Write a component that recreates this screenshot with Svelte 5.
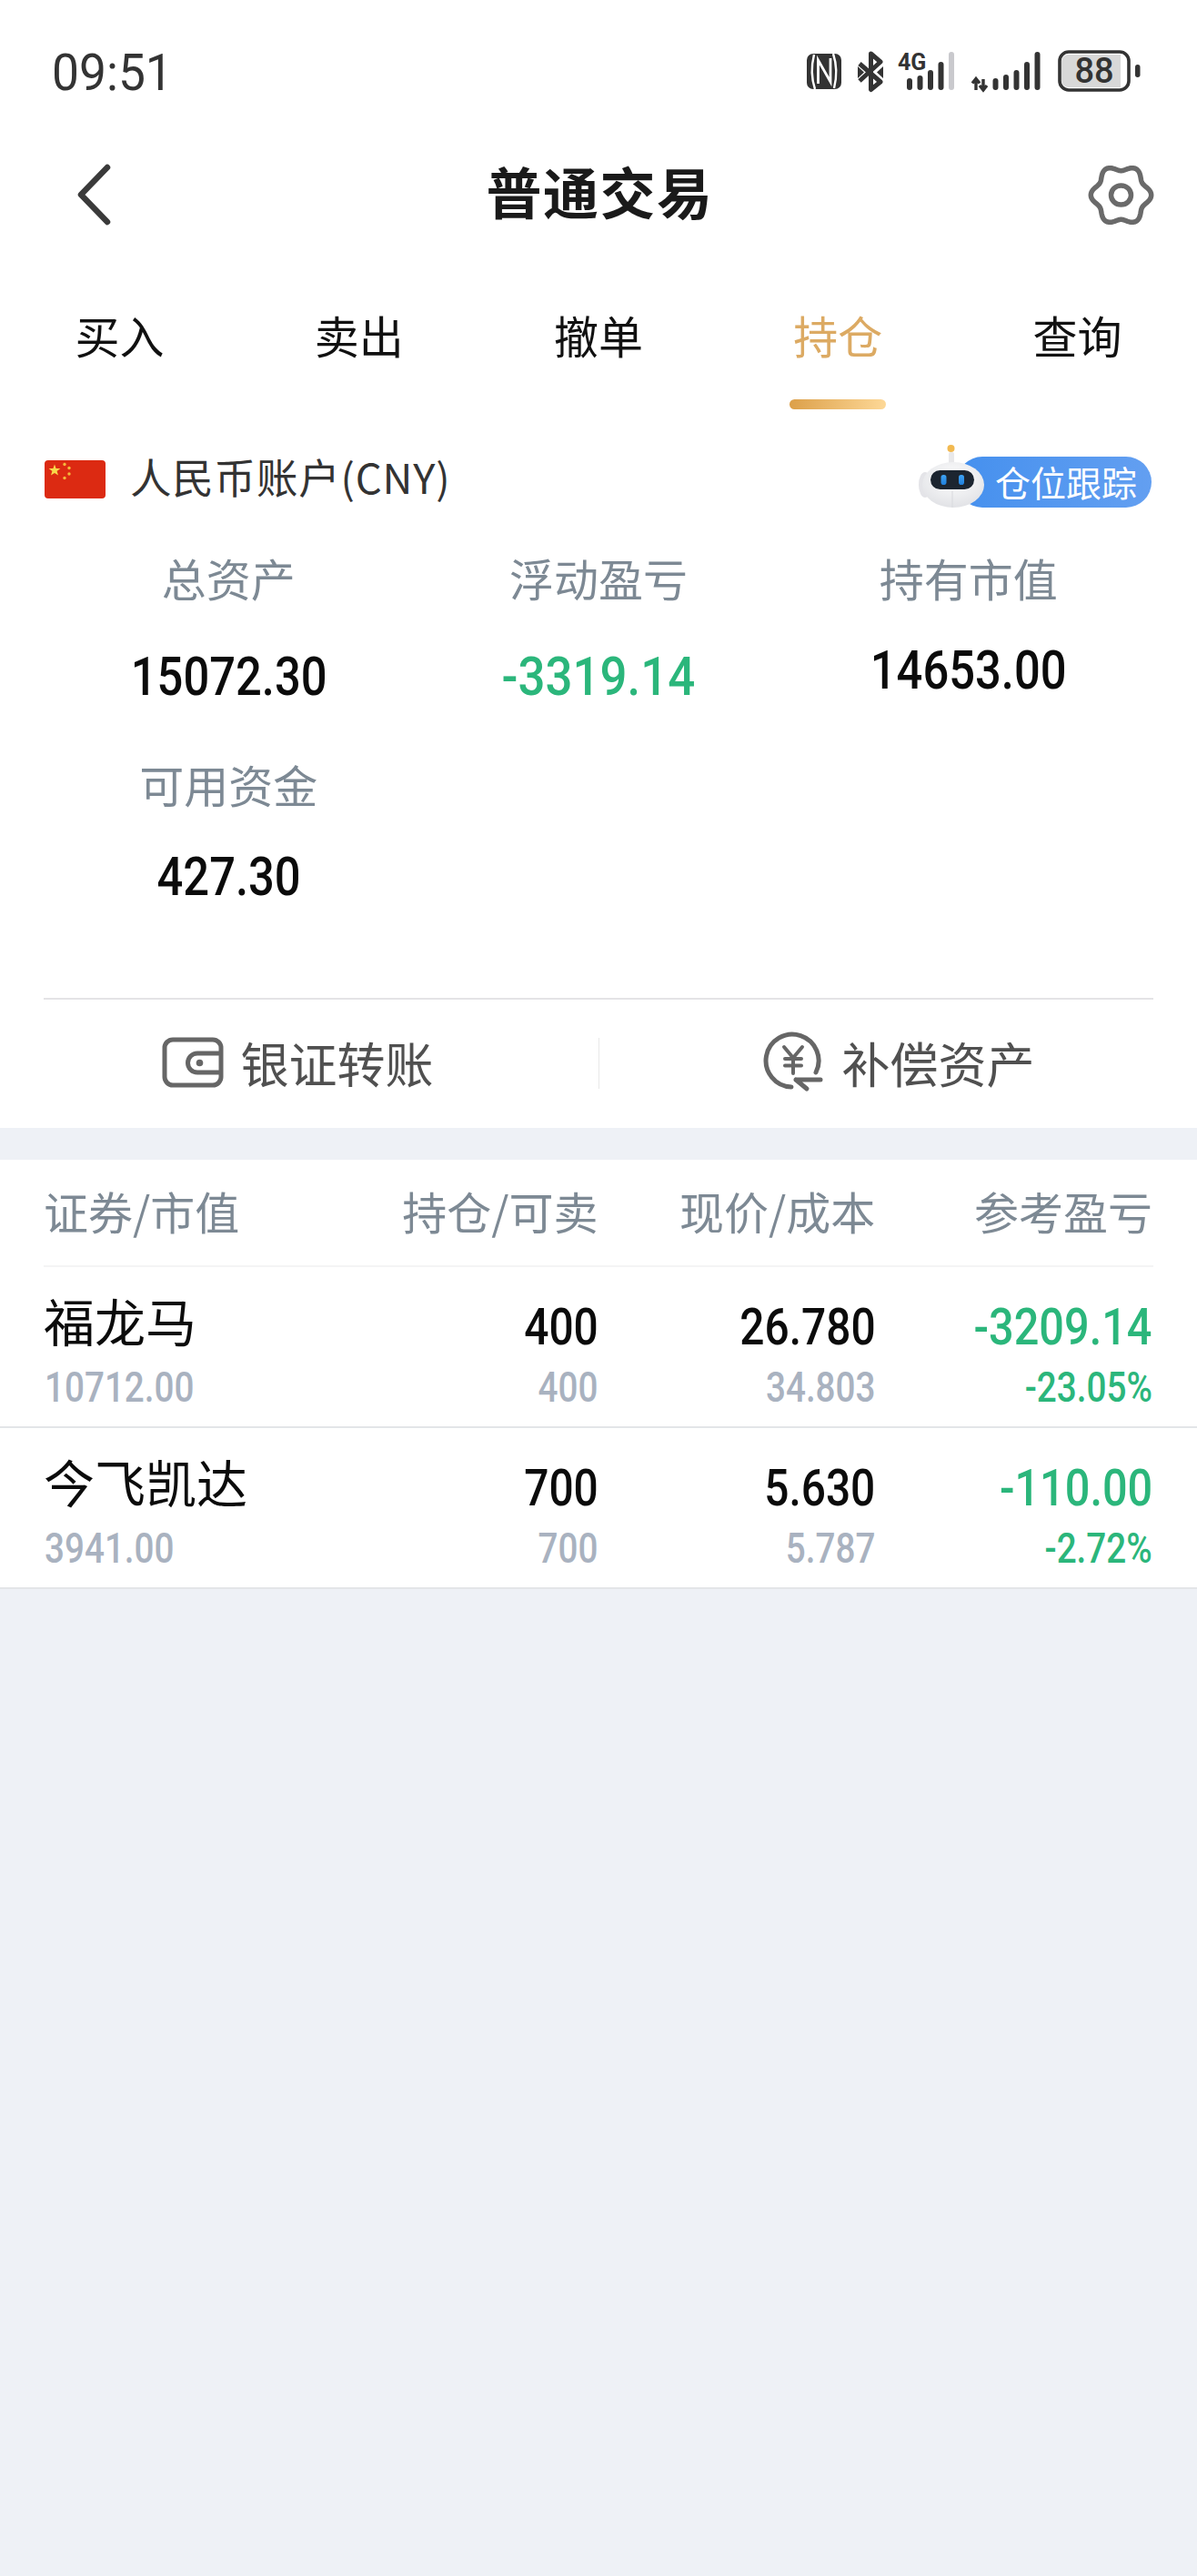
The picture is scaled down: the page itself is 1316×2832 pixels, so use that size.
<script>
  const gear = (() => {
    const cx = 1232.5, cy = 214.5, pts = [];
    for (let i = 0; i < 180; i++) {
      const t = (i / 180) * Math.PI * 2;
      const r = 30 + 3.2 * Math.cos(6 * t);
      pts.push(`${(cx + r * Math.cos(t)).toFixed(2)} ${(cy + r * Math.sin(t)).toFixed(2)}`);
    }
    return 'M' + pts.join('L') + 'Z';
  })();

  const tabs = ['买入', '卖出', '撤单', '持仓', '查询'];
  const active = '持仓';
  const headers = ['证券/市值', '持仓/可卖', '现价/成本', '参考盈亏'];
  const rows = [
    { name: '福龙马', value: '10712.00', qty: '400', avail: '400', price: '26.780', cost: '34.803', pnl: '-3209.14', pct: '-23.05%' },
    { name: '今飞凯达', value: '3941.00', qty: '700', avail: '700', price: '5.630', cost: '5.787', pnl: '-110.00', pct: '-2.72%' }
  ];
</script>

<div class="page">
  <section class="top">
    <div class="status">
      <span class="time">09:51</span>
      <svg class="sicons" viewBox="884 46 372 56" width="372" height="56" aria-hidden="true">
        <rect x="887" y="59" width="38" height="39" rx="7" fill="#333"/>
        <path d="M896 98C892 86 892 72 895 60" fill="none" stroke="#fff" stroke-width="2.4"/>
        <path d="M916 59C920 71 920 85 917 97" fill="none" stroke="#fff" stroke-width="2.4"/>
        <path d="M899.5 92V66L913 90V64" fill="none" stroke="#fff" stroke-width="2.8"/>
        <path d="M945 70L968 90L957.500 98.500V59L968 68L945 89" fill="none" stroke="#333" stroke-width="5" stroke-linejoin="round"/>
        <path d="M943 73L950 79.500L943 86ZM971 73L964 79.500L971 86Z" fill="#333"/>
        <text x="987" y="77" class="fourg">4G</text>
        <rect x="997" y="86" width="6" height="13" rx="3" fill="#333"/>
        <rect x="1008.500" y="83" width="6" height="16" rx="3" fill="#333"/>
        <rect x="1020" y="77" width="6" height="22" rx="3" fill="#333"/>
        <rect x="1031.500" y="68" width="6" height="31" rx="3" fill="#333"/>
        <rect x="1043" y="57" width="6" height="42" rx="3" fill="#c9c9cd"/>
        <path d="M1073 99V87M1069 91.500L1073 86.500L1077 91.500M1081 87V99M1077 94L1081 99L1085 94" fill="none" stroke="#333" stroke-width="3.400"/>
        <rect x="1091.500" y="86" width="6" height="13" rx="3" fill="#333"/>
        <rect x="1103" y="82" width="6" height="17" rx="3" fill="#333"/>
        <rect x="1114.500" y="77" width="6" height="22" rx="3" fill="#333"/>
        <rect x="1126" y="68" width="6" height="31" rx="3" fill="#333"/>
        <rect x="1137.500" y="57" width="6" height="42" rx="3" fill="#333"/>
        <rect x="1165" y="57" width="76" height="42" rx="10" fill="#fff" stroke="#333" stroke-width="3.600"/>
        <path d="M1175 60H1232V96H1175A8 8 0 0 1 1167 88V68A8 8 0 0 1 1175 60Z" fill="#d8d8d8"/>
        <text x="1203" y="91" class="batt" text-anchor="middle">88</text>
        <rect x="1248" y="71" width="5.500" height="14" rx="2.700" fill="#333"/>
      </svg>
    </div>

    <header class="nav">
      <svg class="back" viewBox="0 0 42 70" width="42" height="70" aria-hidden="true">
        <path d="M35 5L6 35L35 65" fill="none" stroke="#3a3a3a" stroke-width="6.500" stroke-linecap="round" stroke-linejoin="round"/>
      </svg>
      <h1>普通交易</h1>
      <svg class="gear" viewBox="1194 176 77 77" width="77" height="77" aria-hidden="true">
        <path d={gear} fill="none" stroke="#6a6a6a" stroke-width="5.500" stroke-linejoin="round"/>
        <ellipse cx="1232.500" cy="214.500" rx="11" ry="10.500" fill="none" stroke="#6a6a6a" stroke-width="5.500"/>
      </svg>
    </header>

    <nav class="tabs">
      {#each tabs as t}
        <div class="tab" class:on={t === active}>{t}</div>
      {/each}
    </nav>

    <div class="acct">
      <svg class="flag" viewBox="49 506 67 42" width="67" height="42" aria-hidden="true">
        <rect x="49" y="506" width="67" height="42" rx="4" fill="#dc2a12"/>
        <polygon points="60,510.500 61.600,515 66.400,515.100 62.600,518 64,522.600 60,519.900 56,522.600 57.400,518 53.600,515.100 58.400,515" fill="#f8d84a"/>
        <circle cx="71" cy="510.500" r="1.700" fill="#f4b93c"/>
        <circle cx="76" cy="514.500" r="1.700" fill="#f4b93c"/>
        <circle cx="76" cy="521" r="1.700" fill="#f4b93c"/>
        <circle cx="71" cy="525.500" r="1.700" fill="#f4b93c"/>
      </svg>
      <span class="acct-name">人民币账户(CNY)</span>
      <div class="track">
        <svg class="bot" viewBox="1008 486 78 74" width="78" height="74" aria-hidden="true">
          <defs>
            <radialGradient id="head" cx="0.5" cy="0.35" r="0.7">
              <stop offset="0" stop-color="#ffffff"/>
              <stop offset="1" stop-color="#dfe0e4"/>
            </radialGradient>
            <linearGradient id="eye" x1="0" y1="0" x2="0" y2="1">
              <stop offset="0" stop-color="#3fa4f5"/>
              <stop offset="1" stop-color="#1f7fdc"/>
            </linearGradient>
          </defs>
          <rect x="1043" y="497" width="6" height="14" rx="2" fill="#e8e8ea"/>
          <circle cx="1045.500" cy="493" r="4" fill="#f2b950"/>
          <ellipse cx="1017" cy="533" rx="7" ry="14" fill="#e4e4e8"/>
          <ellipse cx="1048" cy="533" rx="34" ry="25" fill="url(#head)"/>
          <rect x="1023" y="517" width="48" height="21" rx="10.500" fill="#1c2530"/>
          <rect x="1034.500" y="522" width="6" height="11" rx="2.800" fill="url(#eye)"/>
          <rect x="1054" y="522" width="6" height="11" rx="2.800" fill="url(#eye)"/>
          <path d="M1047 540V558" stroke="#d8d9dd" stroke-width="1"/>
        </svg>
        <span class="pill">仓位跟踪</span>
      </div>
    </div>

    <div class="stats">
      <div class="stat"><div class="lab">总资产</div><div class="val"><span class="n">15072.30</span></div></div>
      <div class="stat"><div class="lab">浮动盈亏</div><div class="val green"><span class="n">-3319.14</span></div></div>
      <div class="stat"><div class="lab">持有市值</div><div class="val up"><span class="n">14653.00</span></div></div>
      <div class="stat second"><div class="lab">可用资金</div><div class="val near"><span class="n">427.30</span></div></div>
    </div>

    <div class="actions">
      <div class="act">
        <svg viewBox="178 1139 72 60" width="72" height="60" aria-hidden="true">
          <rect x="183" y="1144" width="62" height="50" rx="9" fill="none" stroke="#666" stroke-width="5"/>
          <path d="M245 1159H219A10.500 10.500 0 0 0 219 1180H245" fill="none" stroke="#666" stroke-width="5"/>
          <circle cx="221.500" cy="1169.500" r="3.800" fill="#666"/>
        </svg>
        <span>银证转账</span>
      </div>
      <div class="act right">
        <svg viewBox="840 1134 70 70" width="70" height="70" aria-hidden="true">
          <path d="M898 1180A29 29 0 1 0 871 1196" fill="none" stroke="#666" stroke-width="5" stroke-linecap="round"/>
          <path d="M876 1188H903M876 1188L888 1198" fill="none" stroke="#666" stroke-width="5" stroke-linecap="round"/>
          <path d="M863 1152L873 1164L883 1152M873 1164V1181M864 1165H882M864 1172.500H882" fill="none" stroke="#666" stroke-width="4" stroke-linecap="round"/>
        </svg>
        <span>补偿资产</span>
      </div>
    </div>
  </section>

  <section class="table">
    <div class="thead">
      {#each headers as h}<div class="th">{h}</div>{/each}
    </div>
    {#each rows as r}
      <div class="row">
        <div class="td left">
          <div class="name">{r.name}</div>
          <div class="sub"><span class="s">{r.value}</span></div>
        </div>
        <div class="td">
          <div class="main"><span class="m">{r.qty}</span></div>
          <div class="sub"><span class="s">{r.avail}</span></div>
        </div>
        <div class="td">
          <div class="main"><span class="m">{r.price}</span></div>
          <div class="sub"><span class="s">{r.cost}</span></div>
        </div>
        <div class="td green">
          <div class="main"><span class="m">{r.pnl}</span></div>
          <div class="sub"><span class="s gr">{r.pct}</span></div>
        </div>
      </div>
    {/each}
  </section>
</div>

<style>
  :global(body) {
    margin: 0;
    background: #eef1f6;
  }
  .page {
    width: 1316px;
    min-height: 2832px;
    background: #eef1f6;
    font-family: "Noto Sans CJK SC", "Noto Sans", sans-serif;
  }
  .top {
    background: #fff;
    height: 1240px;
  }
  .status {
    height: 154px;
    display: flex;
    justify-content: space-between;
    padding: 46px 60px 0 54px;
    box-sizing: border-box;
    align-items: flex-start;
  }
  .time {
    font: 400 55px/68px Roboto, sans-serif;
    color: #333;
    display: inline-block;
    transform: scaleX(0.97);
    transform-origin: left center;
    margin-left: 3px;
  }
  .sicons {
    flex: none;
  }
  .fourg {
    font: 700 25px Roboto, sans-serif;
    fill: #333;
  }
  .batt {
    font: 500 38px Roboto, sans-serif;
    fill: #333;
  }
  .nav {
    height: 120px;
    display: flex;
    align-items: center;
    justify-content: space-between;
    padding: 0 45px 0 83px;
  }
  .nav h1 {
    margin: 0 0 8px;
    font-size: 61px;
    font-weight: 700;
    line-height: 84px;
    color: #1a1a1a;
    letter-spacing: 1.500px;
  }
  .tabs {
    display: grid;
    grid-template-columns: repeat(5, 1fr);
    height: 180px;
  }
  .tab {
    position: relative;
    text-align: center;
    font-size: 49px;
    line-height: 68px;
    padding-top: 60px;
    color: #111;
  }
  .tab.on {
    color: #dcaa63;
  }
  .tab.on::after {
    content: "";
    position: absolute;
    left: 50%;
    margin-left: -53px;
    top: 165px;
    width: 106px;
    height: 11px;
    border-radius: 5.500px;
    background: linear-gradient(90deg, #dca04a, #fdd897);
  }
  .acct {
    display: flex;
    align-items: center;
    height: 56px;
    margin-top: 45px;
    padding: 0 50px 0 49px;
  }
  .acct-name {
    margin: 0 0 8px 27px;
    font-size: 45.500px;
    line-height: 56px;
    color: #333;
    flex: 1;
    letter-spacing: 0.800px;
  }
  .track {
    position: relative;
    width: 258px;
    height: 56px;
  }
  .pill {
    position: absolute;
    right: 0;
    top: 3px;
    width: 214px;
    height: 56px;
    box-sizing: border-box;
    padding: 0 16px 0 42px;
    border-radius: 28px;
    background: linear-gradient(90deg, #4590ee, #639ff1);
    color: #fff;
    font-size: 39px;
    line-height: 54px;
    white-space: nowrap;
  }
  .bot {
    position: absolute;
    left: 0;
    top: -13px;
    z-index: 1;
  }
  .stats {
    display: grid;
    grid-template-columns: repeat(3, 1fr);
    padding: 0 48px;
    margin-top: 46px;
  }
  .stat {
    text-align: center;
    height: 227px;
  }
  .stat.second {
    grid-column: 1;
    height: 269px;
  }
  .lab {
    font-size: 49px;
    line-height: 68px;
    color: #7d8994;
  }
  .val {
    margin-top: 41px;
    font: 500 60px/68px Roboto, sans-serif;
    color: #0b0b0b;
  }
  .val.up,
  .val.near {
    margin-top: 34px;
  }
  .n {
    display: inline-block;
    transform: scaleX(0.845);
    transform-origin: center;
  }
  .green {
    color: #2bb67b;
  }
  .val.green .n {
    transform: scaleX(0.88);
  }
  .actions {
    border-top: 2px solid #e4e3e6;
    margin: 0 48px;
    height: 140px;
    display: grid;
    grid-template-columns: 1fr 1fr;
    position: relative;
    box-sizing: border-box;
  }
  .actions::after {
    content: "";
    position: absolute;
    left: 609.500px;
    top: 42px;
    width: 1px;
    height: 56px;
    background: #e8e8e8;
  }
  .act {
    display: flex;
    align-items: center;
    justify-content: center;
    gap: 17px;
    font-size: 53px;
    line-height: 72px;
    color: #505050;
    padding: 0 54px 0 0;
  }
  .act.right {
    padding: 0 0 0 50px;
  }
  .act svg {
    flex: none;
  }
  .table {
    background: #fff;
    margin-top: 35px;
  }
  .thead {
    display: grid;
    grid-template-columns: repeat(4, 1fr);
    margin: 0 48px;
    height: 118px;
    align-items: center;
    border-bottom: 2px solid #f4f4f5;
    box-sizing: border-box;
    padding: 0 1px 4px 0;
  }
  .th {
    text-align: right;
    font-size: 49px;
    line-height: 68px;
    color: #7d8994;
    white-space: nowrap;
  }
  .th:first-child {
    text-align: left;
  }
  .row {
    display: grid;
    grid-template-columns: repeat(4, 1fr);
    height: 177px;
    padding: 0 49px 0 48px;
    box-sizing: border-box;
    border-bottom: 2px solid #e3e5e8;
  }
  .row:first-of-type {
    height: 176px;
  }
  .td {
    text-align: right;
    padding-top: 31px;
  }
  .td.left {
    text-align: left;
  }
  .name {
    font-size: 56px;
    line-height: 80px;
    color: #0b0b0b;
    white-space: nowrap;
    margin-top: -13px;
    height: 89px;
  }
  .main {
    font: 500 55px/70px Roboto, sans-serif;
    color: #0b0b0b;
    height: 76px;
  }
  .green .main {
    color: #2bb67b;
  }
  .sub {
    font: 500 46px/50px Roboto, sans-serif;
    color: #a9b2c0;
  }
  .m,
  .s {
    display: inline-block;
    transform-origin: right center;
  }
  .m {
    transform: scaleX(0.87);
  }
  .s {
    transform: scaleX(0.84);
  }
  .green .m {
    transform: scaleX(0.885);
  }
  .left .s {
    transform-origin: left center;
    margin-left: 1px;
  }
  .gr {
    color: #2bb67b;
  }
</style>
